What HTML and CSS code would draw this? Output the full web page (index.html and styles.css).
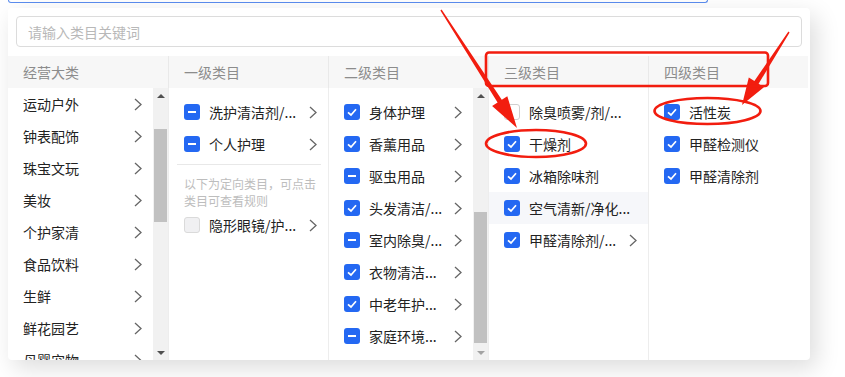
FILE: index.html
```html
<!DOCTYPE html>
<html lang="zh-CN">
<head>
<meta charset="utf-8">
<link rel="stylesheet" href="styles.css">
</head>
<body>
<svg class="defs" width="0" height="0">
  <symbol id="chev" viewBox="0 0 8 13"><path d="M1 1 L7 6.5 L1 12" stroke="#666" stroke-width="1.3" fill="none"/></symbol>
  <symbol id="tick" viewBox="0 0 16 16"><path d="M4 8.3 L7 11 L12 5.3" stroke="#fff" stroke-width="1.7" fill="none"/></symbol>
</svg>

<div class="top-input"></div>

<div class="panel">
  <div class="search-wrap">
    <input class="search" type="text" placeholder="请输入类目关键词">
  </div>
  <div class="table">
    <div class="head">
      <div class="hcell first">经营大类</div>
      <div class="hcell">一级类目</div>
      <div class="hcell">二级类目</div>
      <div class="hcell">三级类目</div>
      <div class="hcell">四级类目</div>
    </div>
    <div class="body">
      <div class="col first">
        <div class="list">
          <div class="row plain"><span class="txt">运动户外</span><svg class="chev"><use href="#chev"/></svg></div>
          <div class="row plain"><span class="txt">钟表配饰</span><svg class="chev"><use href="#chev"/></svg></div>
          <div class="row plain"><span class="txt">珠宝文玩</span><svg class="chev"><use href="#chev"/></svg></div>
          <div class="row plain"><span class="txt">美妆</span><svg class="chev"><use href="#chev"/></svg></div>
          <div class="row plain"><span class="txt">个护家清</span><svg class="chev"><use href="#chev"/></svg></div>
          <div class="row plain"><span class="txt">食品饮料</span><svg class="chev"><use href="#chev"/></svg></div>
          <div class="row plain"><span class="txt">生鲜</span><svg class="chev"><use href="#chev"/></svg></div>
          <div class="row plain"><span class="txt">鲜花园艺</span><svg class="chev"><use href="#chev"/></svg></div>
          <div class="row plain"><span class="txt">母婴宠物</span><svg class="chev"><use href="#chev"/></svg></div>
        </div>
        <div class="sb">
          <div class="sb-btn"><span class="tri up"></span></div>
          <div class="sb-track"><div class="thumb thumb1"></div></div>
          <div class="sb-btn"><span class="tri down"></span></div>
        </div>
      </div>

      <div class="col">
        <div class="list padded">
          <div class="row"><span class="cb half"></span><span class="txt">洗护清洁剂/...</span><svg class="chev"><use href="#chev"/></svg></div>
          <div class="row"><span class="cb half"></span><span class="txt">个人护理</span><svg class="chev"><use href="#chev"/></svg></div>
          <div class="divider"></div>
          <div class="note">以下为定向类目，可点击<br>类目可查看规则</div>
          <div class="row"><span class="cb off"></span><span class="txt">隐形眼镜/护...</span><svg class="chev"><use href="#chev"/></svg></div>
        </div>
      </div>

      <div class="col">
        <div class="list padded">
          <div class="row"><span class="cb on"><svg><use href="#tick"/></svg></span><span class="txt">身体护理</span><svg class="chev"><use href="#chev"/></svg></div>
          <div class="row"><span class="cb on"><svg><use href="#tick"/></svg></span><span class="txt">香薰用品</span><svg class="chev"><use href="#chev"/></svg></div>
          <div class="row"><span class="cb half"></span><span class="txt">驱虫用品</span><svg class="chev"><use href="#chev"/></svg></div>
          <div class="row"><span class="cb on"><svg><use href="#tick"/></svg></span><span class="txt">头发清洁/...</span><svg class="chev"><use href="#chev"/></svg></div>
          <div class="row"><span class="cb half"></span><span class="txt">室内除臭/...</span><svg class="chev"><use href="#chev"/></svg></div>
          <div class="row"><span class="cb on"><svg><use href="#tick"/></svg></span><span class="txt">衣物清洁...</span><svg class="chev"><use href="#chev"/></svg></div>
          <div class="row"><span class="cb on"><svg><use href="#tick"/></svg></span><span class="txt">中老年护...</span><svg class="chev"><use href="#chev"/></svg></div>
          <div class="row"><span class="cb half"></span><span class="txt">家庭环境...</span><svg class="chev"><use href="#chev"/></svg></div>
        </div>
        <div class="sb">
          <div class="sb-btn"><span class="tri up"></span></div>
          <div class="sb-track"><div class="thumb thumb3"></div></div>
          <div class="sb-btn"><span class="tri down light"></span></div>
        </div>
      </div>

      <div class="col">
        <div class="list padded">
          <div class="row"><span class="cb empty"></span><span class="txt">除臭喷雾/剂/...</span></div>
          <div class="row"><span class="cb on"><svg><use href="#tick"/></svg></span><span class="txt">干燥剂</span></div>
          <div class="row"><span class="cb on"><svg><use href="#tick"/></svg></span><span class="txt">冰箱除味剂</span></div>
          <div class="row hover"><span class="cb on"><svg><use href="#tick"/></svg></span><span class="txt">空气清新/净化...</span></div>
          <div class="row"><span class="cb on"><svg><use href="#tick"/></svg></span><span class="txt">甲醛清除剂/...</span><svg class="chev"><use href="#chev"/></svg></div>
        </div>
      </div>

      <div class="col">
        <div class="list padded">
          <div class="row"><span class="cb on"><svg><use href="#tick"/></svg></span><span class="txt">活性炭</span></div>
          <div class="row"><span class="cb on"><svg><use href="#tick"/></svg></span><span class="txt">甲醛检测仪</span></div>
          <div class="row"><span class="cb on"><svg><use href="#tick"/></svg></span><span class="txt">甲醛清除剂</span></div>
        </div>
      </div>
    </div>
  </div>
</div>

<svg class="annot" width="845" height="377" viewBox="0 0 845 377">
  <g fill="#f21d0f">
    <polygon points="441.6,9.6 501.8,99.7 507.3,96.2 517,128 492.1,106 497.6,102.5 440.4,10.4"/>
    <polygon points="789.6,32.4 758.6,83.8 763.9,87.3 742,105 748.8,77.6 754.4,81 788.4,31.6"/>
  </g>
  <g fill="none" stroke="#f21d0f" stroke-width="2.6">
    <rect x="486" y="52.5" width="282" height="33.5" rx="3"/>
    <ellipse cx="536" cy="143.5" rx="50" ry="13.5"/>
    <ellipse cx="707.5" cy="111" rx="53" ry="13"/>
  </g>
</svg>
</body>
</html>
```

FILE: styles.css
```css
* { box-sizing: border-box; }

body {
  margin: 0;
  width: 845px;
  height: 377px;
  overflow: hidden;
  position: relative;
  background: #fff;
  font-family: "Noto Sans CJK SC", "Noto Sans", sans-serif;
  color: #333;
}

.defs { position: absolute; }

.top-input {
  margin-left: 8px;
  width: 700px;
  height: 3px;
  background: #fff;
  border: 1px solid #5b8def;
  border-top: none;
  border-radius: 0 0 4px 4px;
}

.panel {
  margin: 5px 0 0 8px;
  width: 802px;
  height: 352px;
  background: #fff;
  border-radius: 4px;
  box-shadow: 6px 8px 24px rgba(0, 0, 0, 0.14);
  overflow: hidden;
}

.search-wrap {
  padding: 8px 8px 9px 8px;
}

.search {
  display: block;
  width: 786px;
  height: 31px;
  border: 1px solid #dcdcdc;
  border-radius: 4px;
  padding: 0 11px;
  font-family: inherit;
  font-size: 14px;
  color: #333;
  outline: none;
}
.search::placeholder { color: #b8b8b8; }

.table { width: 800px; }

.head {
  display: grid;
  grid-template-columns: repeat(5, 160px);
  height: 32px;
  background: #f7f7f7;
}

.hcell {
  display: flex;
  align-items: center;
  padding-left: 15px;
  font-size: 14px;
  color: #8c8c8c;
  border-left: 1px solid #e9e9e9;
}
.hcell.first { border-left: none; padding-left: 15px; }

.body {
  display: grid;
  grid-template-columns: repeat(5, 160px);
  height: 272px;
}

.col {
  display: flex;
  border-left: 1px solid #ededed;
  overflow: hidden;
  min-width: 0;
}
.col.first { border-left: none; }

.list {
  flex: 1;
  min-width: 0;
  overflow: hidden;
}
.list.padded { padding-top: 8px; }

.row {
  height: 32px;
  display: flex;
  align-items: center;
  padding-left: 15px;
  padding-right: 11px;
  font-size: 14px;
  line-height: 20px;
  white-space: nowrap;
}
.row.hover { background: #f6f7fa; }
.row .cb { margin-right: 9px; }

.txt { color: #222; }

.chev {
  width: 8px;
  height: 13px;
  margin-left: auto;
  flex: none;
}

.cb {
  width: 16px;
  height: 16px;
  border-radius: 3px;
  flex: none;
  display: flex;
  align-items: center;
  justify-content: center;
}
.cb svg { width: 16px; height: 16px; }
.cb.on { background: #2468f2; }
.cb.half { background: #2468f2; }
.cb.half::after {
  content: "";
  width: 8px;
  height: 2px;
  background: #fff;
}
.cb.off { background: #f0f0f2; border: 1px solid #dadada; }
.cb.empty { background: #fff; border: 1px solid #cfcfcf; }

.divider {
  height: 1px;
  background: #e8e8e8;
  margin: 4px 7px 0 8px;
}

.note {
  margin-top: 10px;
  padding-left: 15px;
  font-size: 12px;
  line-height: 17px;
  color: #bdbdbd;
  white-space: nowrap;
}

.sb {
  width: 15px;
  flex: none;
  background: #f1f1f1;
  display: flex;
  flex-direction: column;
}

.sb-btn {
  height: 15px;
  display: flex;
  align-items: center;
  justify-content: center;
}

.tri {
  width: 0;
  height: 0;
  border-left: 4px solid transparent;
  border-right: 4px solid transparent;
}
.tri.up { border-bottom: 4px solid #505050; }
.tri.down { border-top: 4px solid #505050; }
.tri.down.light { border-top-color: #a3a3a3; }

.sb-track { flex: 1; }

.thumb {
  margin: 0 1px;
  background: #c1c1c1;
}
.thumb1 { margin-top: 26px; height: 93px; }
.thumb3 { margin-top: 109px; height: 131px; }

.annot {
  position: absolute;
  left: 0;
  top: 0;
  pointer-events: none;
}
```
